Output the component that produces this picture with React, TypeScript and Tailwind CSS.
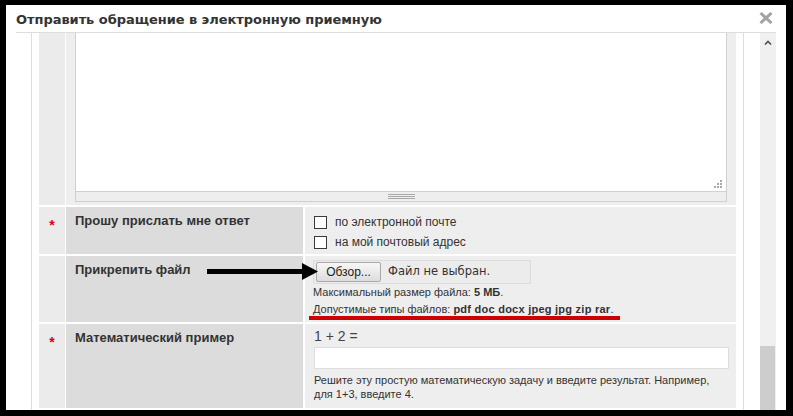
import React from "react";

const sans = "font-['Liberation_Sans',Arial,sans-serif]";

const Star = () => <span className="text-[#dd0000] font-bold">*</span>;

const Check = ({ label }: { label: string }) => (
  <label className="flex items-center h-[20px] gap-[8px]">
    <span className="w-[13px] h-[13px] border border-[#3a3a3a] bg-white" />
    <span className="text-[12px] leading-[14px] text-[#333]">{label}</span>
  </label>
);

const Row = ({ h, star, label, children }: { h: string; star?: boolean; label: string; children: React.ReactNode }) => (
  <div className={`flex ${h}`}>
    <div className="w-[26px] mr-[1px] bg-[#ebebeb] flex justify-center pt-[10px] text-[14px] leading-[16px]">{star && <Star />}</div>
    <div className="w-[237px] mr-[2px] bg-[#dcdcdc] pl-[9px] pt-[6px] text-[13px] leading-[16px] font-bold text-[#333]">
      {label}
    </div>
    <div className="flex-1 bg-[#eeeeee]">{children}</div>
  </div>
);

export default function App() {
  return (
    <div className={`relative w-[793px] h-[416px] bg-black pt-[5px] pl-[6px] overflow-hidden ${sans}`}>
      <div className="w-[780px] h-[405px] bg-white flex flex-col">
        {/* header */}
        <div className="ml-[10px] w-[760px] h-[28px] shrink-0 border-b border-[#dddddd] flex items-center justify-between pt-[2px] pr-[3px]">
          <span className="font-['DejaVu_Sans',Verdana,sans-serif] font-bold text-[13px] tracking-[-0.05px] text-[#333]">
            Отправить обращение в электронную приемную
          </span>
          <svg width="14" height="12" viewBox="0 0 14 12" className="mb-[4px]">
            <path d="M1.5 1 L12.5 11 M12.5 1 L1.5 11" stroke="#a3a3a3" strokeWidth="3" />
          </svg>
        </div>

        {/* body */}
        <div className="flex h-[377px] pl-[25px]">
          <div className="border-l border-[#dddddd] pl-[7px] h-full">
            <div className="w-[697px] h-full flex flex-col gap-[2px] overflow-hidden">
              {/* textarea row */}
              <div className="flex h-[172px] shrink-0">
                <div className="w-[26px] mr-[1px] bg-[#ebebeb]" />
                <div className="flex-1 bg-[#eeeeee] pl-[9px] pr-[9px] pb-[3px]">
                  <div className="h-full border-x border-b border-[#d0d0d0] flex flex-col">
                    <div className="flex-1 bg-white relative">
                      <svg width="9" height="9" viewBox="0 0 9 9" className="absolute right-[3px] bottom-[2px]">
                        <rect x="6" y="0" width="2" height="2" fill="#aaa" />
                        <rect x="3" y="3" width="2" height="2" fill="#aaa" />
                        <rect x="6" y="3" width="2" height="2" fill="#aaa" />
                        <rect x="0" y="6" width="2" height="2" fill="#aaa" />
                        <rect x="3" y="6" width="2" height="2" fill="#aaa" />
                        <rect x="6" y="6" width="2" height="2" fill="#aaa" />
                      </svg>
                    </div>
                    <div className="h-[10px] bg-[#eeeeee] border-t border-[#d0d0d0] flex flex-col items-center justify-center gap-[1px]">
                      <div className="w-[27px] h-[1px] bg-[#aaa]" />
                      <div className="w-[27px] h-[1px] bg-[#aaa]" />
                      <div className="w-[27px] h-[1px] bg-[#aaa]" />
                    </div>
                  </div>
                </div>
              </div>

              <Row h="h-[47px] shrink-0" star label="Прошу прислать мне ответ">
                <div className="pl-[9px] pt-[5px]">
                  <Check label="по электронной почте" />
                  <Check label="на мой почтовый адрес" />
                </div>
              </Row>

              <Row h="h-[66px] shrink-0" label="Прикрепить файл">
                <div className="pl-[8px] pt-[4px]">
                  <div className="w-[218px] h-[24px] border border-[#dcdcdc] bg-[#ececec] flex items-center pl-[2px]">
                    <div className="w-[65px] h-[20px] border border-[#a9a9a9] rounded-[2px] bg-gradient-to-b from-[#f7f7f7] to-[#dddddd] flex items-center justify-center text-[12px] text-[#222]">
                      Обзор...
                    </div>
                    <span className="ml-[7px] font-['DejaVu_Sans',Verdana,sans-serif] text-[11.5px] text-[#333]">Файл не выбран.</span>
                  </div>
                  <div className="text-[11px] leading-[17px] text-[#333]">
                    Максимальный размер файла: <b>5 МБ</b>.
                  </div>
                  <div className="text-[11px] leading-[17px] text-[#333]">
                    Допустимые типы файлов: <b className="tracking-[0.25px]">pdf doc docx jpeg jpg zip rar</b>.
                  </div>
                </div>
              </Row>

              <Row h="h-[84px] shrink-0" star label="Математический пример">
                <div className="pl-[9px] pt-[3px]">
                  <div className="text-[14px] leading-[18px] text-[#444]">1 + 2 =</div>
                  <div className="mt-[2px] w-[415px] h-[22px] border border-[#dddddd] bg-white" />
                  <div className="mt-[4px] text-[11px] leading-[14px] text-[#333]">
                    Решите эту простую математическую задачу и введите результат. Например,
                    <br />
                    для 1+3, введите 4.
                  </div>
                </div>
              </Row>
            </div>
          </div>
          <div className="w-[7px]" />
          <div className="w-[17px] border-l border-[#dddddd]" />
          {/* scrollbar */}
          <div className="w-[16px] h-full bg-[#f0f0f0] flex flex-col">
            <div className="h-[17px] flex justify-center pt-[7px]">
              <svg width="8" height="5" viewBox="0 0 8 5">
                <path d="M1 4.5 L4 1.5 L7 4.5" stroke="#505050" strokeWidth="1.6" fill="none" />
              </svg>
            </div>
            <div className="mt-auto h-[64px] w-[15px] bg-[#cdcdcd]" />
          </div>
        </div>
      </div>

      {/* annotations */}
      <svg width="112" height="18" viewBox="0 0 112 18" className="absolute left-[207px] top-[262px]">
        <rect x="0" y="7" width="97" height="5" fill="#000" />
        <path d="M95 1 L111 9.5 L95 18 Z" fill="#000" />
      </svg>
      <div className="absolute left-[309px] top-[316px] w-[311px] h-[4px] bg-[#cc0000]" />
    </div>
  );
}
